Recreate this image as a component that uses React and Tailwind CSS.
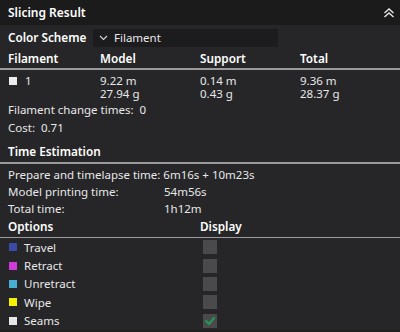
import React from "react";

const font = { fontFamily: '"Noto Sans", "Open Sans", sans-serif' };

function DoubleChevron() {
  return (
    <svg width="12" height="10" viewBox="0 0 12 10" fill="none" stroke="#e6e6e6" strokeWidth="1.4">
      <polyline points="1.5,5 6,1 10.5,5" />
      <polyline points="1.5,9 6,5 10.5,9" />
    </svg>
  );
}

function Check() {
  return (
    <svg width="12" height="10" viewBox="0 0 12 10" fill="none" stroke="#1f9e52" strokeWidth="2" strokeLinecap="round" strokeLinejoin="round">
      <polyline points="2,5 5,8 10,2" />
    </svg>
  );
}

const options = [
  { name: "Travel", color: "bg-[#3b4aa6]", checked: false },
  { name: "Retract", color: "bg-[#d03cd8]", checked: false },
  { name: "Unretract", color: "bg-[#47afd6]", checked: false },
  { name: "Wipe", color: "bg-[#f4f000]", checked: false },
  { name: "Seams", color: "bg-[#e6e6e6]", checked: true },
];

export default function App() {
  return (
    <div className="w-[400px] h-[332px] bg-[#262628] text-[#e8e8e8] text-[11.5px] overflow-hidden flex flex-col" style={font}>
      <div className="h-[25px] shrink-0 bg-[#1b1b1c] flex items-center justify-between pl-2 pr-[5px]">
        <span className="text-[12px] font-semibold text-white">Slicing Result</span>
        <DoubleChevron />
      </div>

      <div className="h-[23px] shrink-0 flex items-center pl-2 mt-[1px]">
        <span className="w-[85px] font-semibold text-[11.75px] text-white">Color Scheme</span>
        <div className="w-[185px] h-[18px] bg-[#1c1c1e] flex items-center pl-[6px] gap-[6px]">
          <svg width="9" height="6" viewBox="0 0 9 6" fill="none" stroke="#d8d8d8" strokeWidth="1.1">
            <polyline points="1,1 4.5,4.5 8,1" />
          </svg>
          <span>Filament</span>
        </div>
      </div>

      <div className="h-[19px] shrink-0 grid grid-cols-[92px_100px_100px_1fr] pl-2 items-center font-semibold text-[11.75px] text-white">
        <span>Filament</span>
        <span>Model</span>
        <span>Support</span>
        <span>Total</span>
      </div>
      <div className="h-[1.5px] bg-[#9a9a9a] shrink-0" />

      <div className="grid grid-cols-[92px_100px_100px_1fr] pl-2 pt-[4.5px] leading-[13px] shrink-0">
        <div className="flex items-center gap-[8px] h-[13px]">
          <span className="w-[8px] h-[8px] bg-[#ececec] ml-[1px]" />
          <span>1</span>
        </div>
        <div className="flex flex-col"><span className="h-[13px]">9.22 m</span><span className="h-[13px]">27.94 g</span></div>
        <div className="flex flex-col"><span className="h-[13px]">0.14 m</span><span className="h-[13px]">0.43 g</span></div>
        <div className="flex flex-col"><span className="h-[13px]">9.36 m</span><span className="h-[13px]">28.37 g</span></div>
      </div>

      <div className="pl-2 mt-[1px] h-[18px] leading-[18px] shrink-0">Filament change times:&nbsp; 0</div>
      <div className="pl-2 h-[17px] leading-[17px] shrink-0">Cost:&nbsp; 0.71</div>

      <div className="pl-2 mt-[6px] h-[20px] shrink-0 flex items-center font-semibold text-[11.75px] text-white">Time Estimation</div>
      <div className="h-[1.5px] bg-[#9a9a9a] shrink-0" />

      <div className="pl-2 pt-[2px] leading-[17px] shrink-0">
        <div className="h-[17px]">Prepare and timelapse time: 6m16s + 10m23s</div>
        <div className="h-[17px] grid grid-cols-[156px_1fr]"><span>Model printing time:</span><span>54m56s</span></div>
        <div className="h-[17px] grid grid-cols-[156px_1fr]"><span>Total time:</span><span>1h12m</span></div>
      </div>

      <div className="h-[19px] mt-[1px] shrink-0 grid grid-cols-[192px_1fr] pl-2 items-center font-semibold text-[11.75px] text-white">
        <span>Options</span>
        <span>Display</span>
      </div>
      <div className="h-[1.5px] bg-[#9a9a9a] shrink-0" />

      <div className="pl-2 flex flex-col shrink-0">
        {options.map((o) => (
          <div key={o.name} className="h-[18.4px] grid grid-cols-[195px_1fr] items-center">
            <div className="flex items-center gap-[7px]">
              <span className={`w-[8px] h-[8px] ml-[1px] ${o.color}`} />
              <span>{o.name}</span>
            </div>
            <div className="w-[14px] h-[14px] bg-[#4a4a4c] flex items-center justify-center">
              {o.checked ? <Check /> : null}
            </div>
          </div>
        ))}
      </div>
      <div className="flex-1 bg-[#1f1f20]" />
    </div>
  );
}
